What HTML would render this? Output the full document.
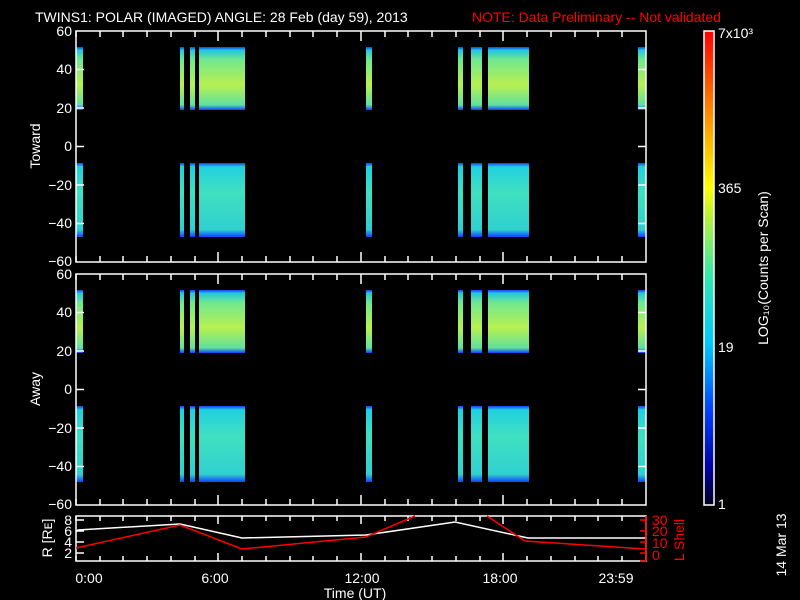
<!DOCTYPE html><html><head><style>body{margin:0;background:#000;width:800px;height:600px;overflow:hidden}svg{display:block}text{font-family:"Liberation Sans",sans-serif;font-size:14px}</style></head><body>
<svg width="800" height="600" xmlns="http://www.w3.org/2000/svg">
<defs>
<linearGradient id="cb" x1="0" y1="1" x2="0" y2="0">
<stop offset="0" stop-color="#000020"/><stop offset="0.08" stop-color="#0000a0"/><stop offset="0.2" stop-color="#0040ff"/><stop offset="0.34" stop-color="#00c8ff"/><stop offset="0.48" stop-color="#30e8b0"/><stop offset="0.6" stop-color="#b0f040"/><stop offset="0.67" stop-color="#ffff00"/><stop offset="0.82" stop-color="#ff9000"/><stop offset="1" stop-color="#ff0000"/>
</linearGradient>
<linearGradient id="bd" x1="0" y1="0" x2="0" y2="1">
<stop offset="0" stop-color="#1040ff"/><stop offset="0.05" stop-color="#20c8e0"/><stop offset="0.2" stop-color="#70e890"/><stop offset="0.6" stop-color="#b8f050"/><stop offset="0.92" stop-color="#60e0a0"/><stop offset="1" stop-color="#1040ff"/>
</linearGradient>
<linearGradient id="bd2" x1="0" y1="0" x2="0" y2="1">
<stop offset="0" stop-color="#1040ff"/><stop offset="0.05" stop-color="#20d0e0"/><stop offset="0.4" stop-color="#40e0c0"/><stop offset="0.9" stop-color="#30d0d0"/><stop offset="1" stop-color="#1040ff"/>
</linearGradient>
<g id="cols">
<rect x="76" width="7" height="1"/><rect x="180" width="4" height="1"/><rect x="190" width="5" height="1"/><rect x="199" width="46" height="1"/><rect x="366" width="6" height="1"/><rect x="458" width="5" height="1"/><rect x="471" width="11" height="1"/><rect x="488" width="41" height="1"/><rect x="638" width="8" height="1"/>
</g>
</defs>
<text x="35" y="22" fill="#fff">TWINS1: POLAR (IMAGED) ANGLE: 28 Feb (day  59), 2013</text>
<text x="472" y="22" fill="#f00">NOTE: Data Preliminary -- Not validated</text>
<g fill="url(#bd)"><use href="#cols" transform="translate(0,47) scale(1,63)"/></g>
<g fill="url(#bd2)"><use href="#cols" transform="translate(0,163) scale(1,74)"/></g>
<g fill="url(#bd)"><use href="#cols" transform="translate(0,290) scale(1,63)"/></g>
<g fill="url(#bd2)"><use href="#cols" transform="translate(0,406) scale(1,76)"/></g>
<g fill="none" stroke="#fff" stroke-width="1.5">
<rect x="76" y="31" width="570" height="231"/>
<rect x="76" y="274" width="570" height="231"/>
<rect x="76" y="516" width="570" height="45"/>
<rect x="704" y="31" width="10" height="474" fill="url(#cb)"/>
</g>
<g stroke="#fff" stroke-width="1.5" id="tk">
<path d="M76 31v6M100 31v6M123 31v6M147 31v6M171 31v6M195 31v6M218 31v10M242 31v6M266 31v6M290 31v6M313 31v6M337 31v6M361 31v10M385 31v6M408 31v6M432 31v6M456 31v6M480 31v6M503 31v10M527 31v6M551 31v6M575 31v6M598 31v6M622 31v6M76 262v-6M100 262v-6M123 262v-6M147 262v-6M171 262v-6M195 262v-6M218 262v-10M242 262v-6M266 262v-6M290 262v-6M313 262v-6M337 262v-6M361 262v-10M385 262v-6M408 262v-6M432 262v-6M456 262v-6M480 262v-6M503 262v-10M527 262v-6M551 262v-6M575 262v-6M598 262v-6M622 262v-6"/>
<path d="M76 69.5h8M76 108h8M76 146.5h8M76 185h8M76 223.5h8M646 69.5h-8M646 108h-8M646 146.5h-8M646 185h-8M646 223.5h-8"/>
</g>
<use href="#tk" transform="translate(0,243)"/>
<g stroke="#fff" stroke-width="1.5">
<path d="M76 516v5M100 516v5M123 516v5M147 516v5M171 516v5M195 516v5M218 516v8M242 516v5M266 516v5M290 516v5M313 516v5M337 516v5M361 516v8M385 516v5M408 516v5M432 516v5M456 516v5M480 516v5M503 516v8M527 516v5M551 516v5M575 516v5M598 516v5M622 516v5M76 561v-5M100 561v-5M123 561v-5M147 561v-5M171 561v-5M195 561v-5M218 561v-8M242 561v-5M266 561v-5M290 561v-5M313 561v-5M337 561v-5M361 561v-8M385 561v-5M408 561v-5M432 561v-5M456 561v-5M480 561v-5M503 561v-8M527 561v-5M551 561v-5M575 561v-5M598 561v-5M622 561v-5"/>
<path d="M76 520h8M76 531h8M76 542h8M76 553h8"/>
</g>
<g fill="#fff" text-anchor="end">
<text x="72" y="36">60</text><text x="72" y="74">40</text><text x="72" y="113">20</text><text x="72" y="151">0</text><text x="72" y="190">−20</text><text x="72" y="228">−40</text><text x="72" y="266">−60</text>
<text x="72" y="279">60</text><text x="72" y="317">40</text><text x="72" y="356">20</text><text x="72" y="394">0</text><text x="72" y="433">−20</text><text x="72" y="471">−40</text><text x="72" y="509">−60</text>
<text x="72" y="525" font-size="12">8</text><text x="72" y="536" font-size="12">6</text><text x="72" y="547" font-size="12">4</text><text x="72" y="558" font-size="12">2</text>
</g>
<text transform="translate(40,146) rotate(-90)" fill="#fff" text-anchor="middle">Toward</text>
<text transform="translate(40,389) rotate(-90)" fill="#fff" text-anchor="middle">Away</text>
<text transform="translate(52,538) rotate(-90)" fill="#fff" text-anchor="middle" font-size="13">R [Rᴇ]</text>
<g fill="#fff" text-anchor="middle">
<text x="89" y="583">0:00</text><text x="215" y="583">6:00</text><text x="362" y="583">12:00</text><text x="500" y="583">18:00</text><text x="616" y="583">23:59</text>
<text x="355" y="598">Time (UT)</text>
</g>
<g fill="#fff">
<text x="718" y="38" font-size="12">7x10³</text><text x="718" y="193" font-size="12">365</text><text x="718" y="352" font-size="12">19</text><text x="718" y="509" font-size="12">1</text>
<text transform="translate(768,268) rotate(-90)" text-anchor="middle" font-size="13">LOG₁₀(Counts per Scan)</text>
<text transform="translate(786,545) rotate(-90)" text-anchor="middle" font-size="10">14 Mar 13</text>
</g>
<polyline fill="none" stroke="#fff" stroke-width="1.5" points="76,532 78,530 180,524 242,538 366,535 455,522 528,538 646,538"/>
<polyline fill="none" stroke="#f00" stroke-width="1.5" points="76,548 180,525 242,549 366,537 415,516"/>
<polyline fill="none" stroke="#f00" stroke-width="1.5" points="487,516 525,541 646,549"/>
<g stroke="#f00" stroke-width="1.5"><path d="M646 516v45M646 520h-6M646 531h-6M646 542h-6M646 553h-6M646 561h-6"/></g>
<g fill="#f00" font-size="12"><text x="652" y="525">30</text><text x="652" y="536">20</text><text x="652" y="548">10</text><text x="652" y="560">0</text>
<text transform="translate(684,540) rotate(-90)" text-anchor="middle" font-size="12">L Shell</text></g>
</svg></body></html>
